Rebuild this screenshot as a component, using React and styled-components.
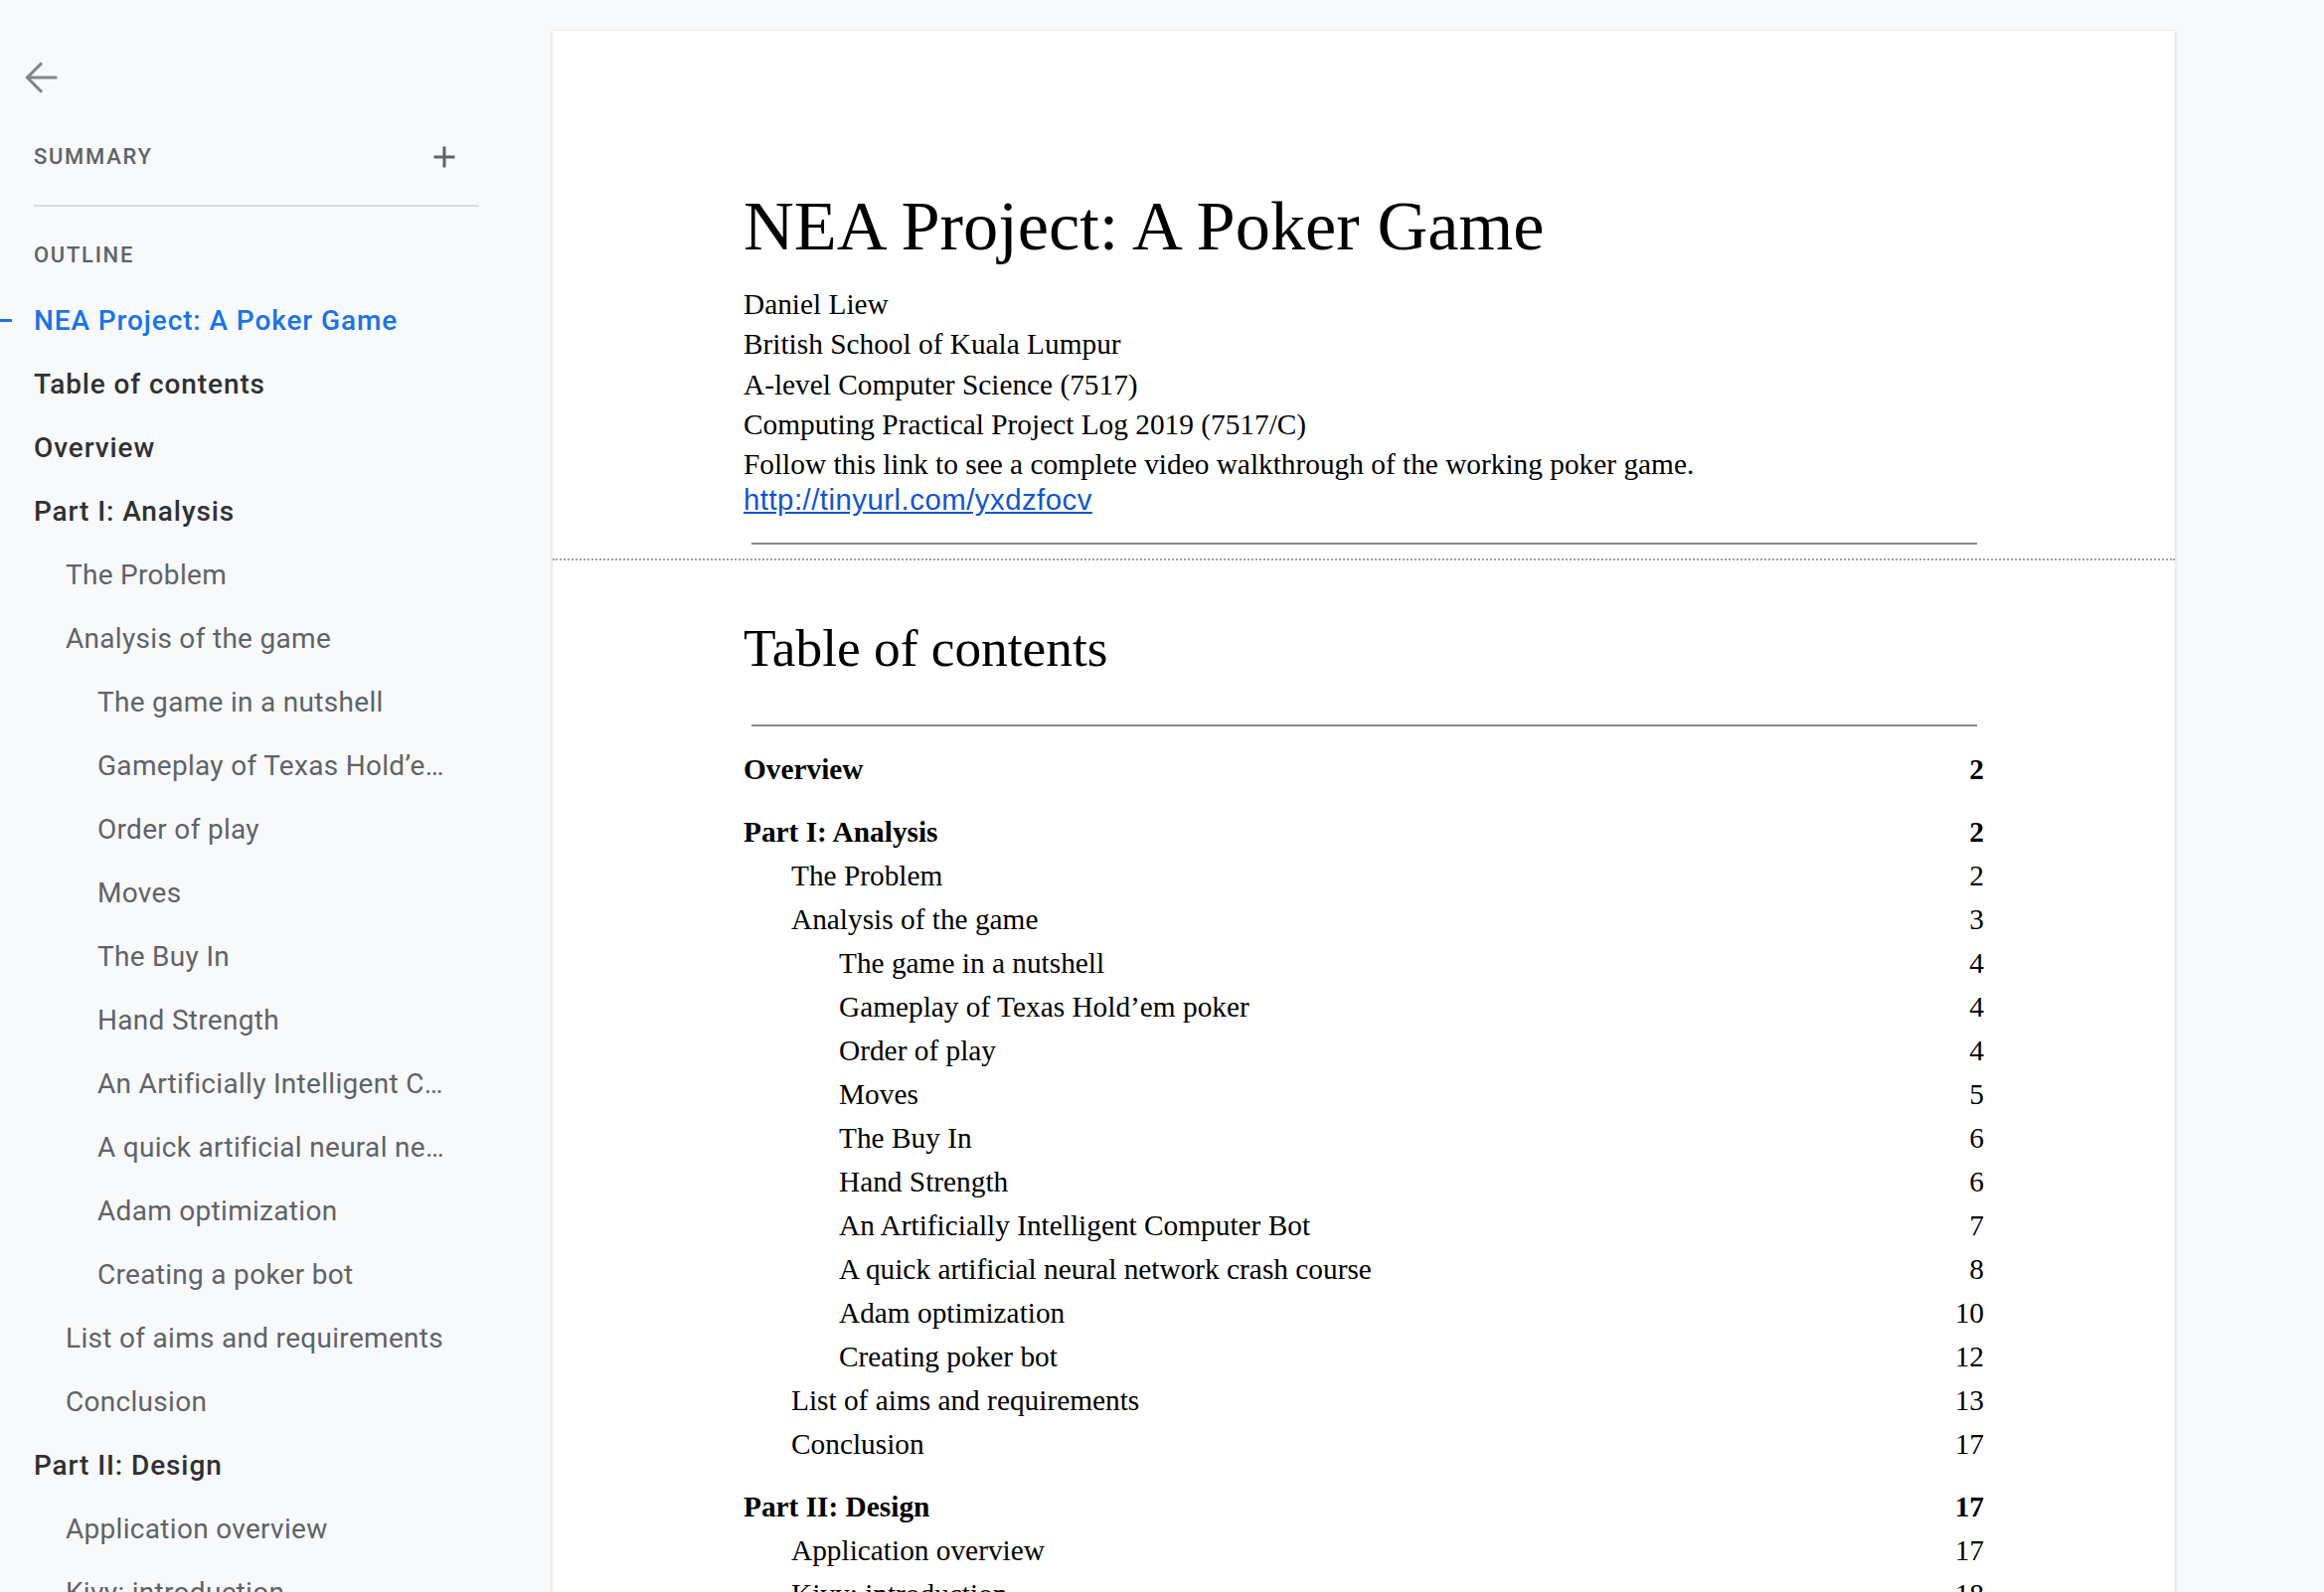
import styled, { createGlobalStyle } from "styled-components";

const Global = createGlobalStyle`
    html, body { margin: 0; padding: 0; background: #f8f9fa; overflow: hidden; }
    #root { height: 1602px; overflow: hidden; }
`

const Layout = styled.div`
    display: flex; width: 2338px; height: 1602px; overflow: hidden;
    background: #f8f9fa;
`

const Sidebar = styled.aside`
    width: 556px; flex-shrink: 0;
    display: flex; flex-direction: column;
    padding-top: 55px;
    font-family: Roboto, "Noto Sans", sans-serif;
`

const BackButton = styled.div`
    width: 48px; height: 48px; margin-left: 18px;
    display: flex; align-items: center; justify-content: center;
    color: #80868b;
`

const Section = styled.div`
    margin: 33px 74px 0 34px;
`

const SummaryRow = styled.div`
    height: 48px; padding-right: 17px;
    display: flex; align-items: center; justify-content: space-between;
`

const Label = styled.div`
    font-size: 22px; font-weight: 500; letter-spacing: 1.7px;
    color: #5f6368; line-height: 32px;
`

const AddButton = styled.div`
    width: 36px; height: 36px;
    display: flex; align-items: center; justify-content: center;
    color: #5f6368;
`

const Divider = styled.div`
    height: 2px; margin-top: 24px; background: #dadce0;
`

const OutlineLabel = styled(Label)`
    margin: 33px 0 0 34px;
`

const OutlineList = styled.div`
    width: 448px; margin-top: 18px;
    display: flex; flex-direction: column;
`

const OutlineItem = styled.div`
    position: relative;
    height: 64px; line-height: 64px;
    padding-left: ${props => 34 + props.level * 32}px;
    font-size: 28px;
    font-weight: ${props => (props.level === 0 ? 500 : 400)};
    letter-spacing: ${props => (props.level === 0 ? 0.9 : 0.3)}px;
    color: ${props => (props.active ? "#1a73e8" : props.level === 0 ? "#303134" : "#5f6368")};
    white-space: nowrap; overflow: hidden; text-overflow: ellipsis;
`

const ActiveMark = styled.span`
    position: absolute; left: 0; top: 30px;
    width: 12px; height: 3px; background: #1a73e8;
`

const Main = styled.main`
    flex: 1; display: flex; align-items: flex-start;
`

const Page = styled.div`
    width: 1632px; min-height: 2400px; margin-top: 31px;
    background: #fff;
    box-shadow: 0 1px 3px 1px rgba(60, 64, 67, 0.15);
    font-family: "Liberation Serif", "Times New Roman", serif;
    color: #000;
`

const TitleSection = styled.div`
    padding: 150px 192px 14px;
`

const Title = styled.h1`
    margin: 0 0 13px; font-size: 70.4px; font-weight: 400; line-height: 92px;
`

const InfoLine = styled.div`
    font-size: 29.33px; line-height: 40.25px;
`

const Link = styled.a`
    display: block;
    font-family: "Liberation Sans", Arial, sans-serif;
    font-size: 29.33px; line-height: 32px; letter-spacing: 0.5px;
    color: #1155cc; text-decoration: underline;
`

const Rule = styled.div`
    height: 2px; background: #8a8a8a;
    margin: ${props => props.top}px 7px 0 8px;
`

const PageBreak = styled.div`
    border-top: 2px dotted #a0a0a0;
`

const TocSection = styled.div`
    padding: 53px 192px 0;
`

const TocHeading = styled.h2`
    margin: 0; font-size: 53.33px; font-weight: 400; line-height: 70px;
`

const TocList = styled.div`
    margin-top: 2px;
    display: flex; flex-direction: column;
`

const TocRow = styled.div`
    display: flex; justify-content: space-between;
    padding-left: ${props => props.level * 48}px;
    margin-top: ${props => (props.level === 0 ? 19 : 0)}px;
    font-size: 29.33px; line-height: 44px;
    font-weight: ${props => (props.level === 0 ? 700 : 400)};
`

const outline = [
    [0, "NEA Project: A Poker Game", true],
    [0, "Table of contents"],
    [0, "Overview"],
    [0, "Part I: Analysis"],
    [1, "The Problem"],
    [1, "Analysis of the game"],
    [2, "The game in a nutshell"],
    [2, "Gameplay of Texas Hold’em poker"],
    [2, "Order of play"],
    [2, "Moves"],
    [2, "The Buy In"],
    [2, "Hand Strength"],
    [2, "An Artificially Intelligent Computer Bot"],
    [2, "A quick artificial neural network crash course"],
    [2, "Adam optimization"],
    [2, "Creating a poker bot"],
    [1, "List of aims and requirements"],
    [1, "Conclusion"],
    [0, "Part II: Design"],
    [1, "Application overview"],
    [1, "Kivy: introduction"],
    [1, "Kivy: screens"],
]

const toc = [
    [0, "Overview", 2],
    [0, "Part I: Analysis", 2],
    [1, "The Problem", 2],
    [1, "Analysis of the game", 3],
    [2, "The game in a nutshell", 4],
    [2, "Gameplay of Texas Hold’em poker", 4],
    [2, "Order of play", 4],
    [2, "Moves", 5],
    [2, "The Buy In", 6],
    [2, "Hand Strength", 6],
    [2, "An Artificially Intelligent Computer Bot", 7],
    [2, "A quick artificial neural network crash course", 8],
    [2, "Adam optimization", 10],
    [2, "Creating poker bot", 12],
    [1, "List of aims and requirements", 13],
    [1, "Conclusion", 17],
    [0, "Part II: Design", 17],
    [1, "Application overview", 17],
    [1, "Kivy: introduction", 18],
    [1, "Kivy: screens", 19],
]

function App() {
    return (
        <Layout>
            <Global />
            <Sidebar>
                <BackButton>
                    <svg width="46" height="46" viewBox="0 0 24 24" fill="none" stroke="currentColor" strokeWidth="1.6">
                        <path d="M20 12H4.6M12 4.4L4.4 12l7.6 7.6" />
                    </svg>
                </BackButton>
                <Section>
                    <SummaryRow>
                        <Label>SUMMARY</Label>
                        <AddButton>
                            <svg width="36" height="36" viewBox="0 0 24 24" fill="currentColor">
                                <path d="M19 13h-6v6h-2v-6H5v-2h6V5h2v6h6v2z" />
                            </svg>
                        </AddButton>
                    </SummaryRow>
                    <Divider />
                </Section>
                <OutlineLabel>OUTLINE</OutlineLabel>
                <OutlineList>
                    {outline.map(([level, text, active]) => (
                        <OutlineItem key={text} level={level} active={active}>
                            {active && <ActiveMark />}
                            {text}
                        </OutlineItem>
                    ))}
                </OutlineList>
            </Sidebar>
            <Main>
                <Page>
                    <TitleSection>
                        <Title>NEA Project: A Poker Game</Title>
                        <InfoLine>Daniel Liew</InfoLine>
                        <InfoLine>British School of Kuala Lumpur</InfoLine>
                        <InfoLine>A-level Computer Science (7517)</InfoLine>
                        <InfoLine>Computing Practical Project Log 2019 (7517/C)</InfoLine>
                        <InfoLine>Follow this link to see a complete video walkthrough of the working poker game.</InfoLine>
                        <Link>http://tinyurl.com/yxdzfocv</Link>
                        <Rule top={27} />
                    </TitleSection>
                    <PageBreak />
                    <TocSection>
                        <TocHeading>Table of contents</TocHeading>
                        <Rule top={42} />
                        <TocList>
                            {toc.map(([level, text, page]) => (
                                <TocRow key={text} level={level}>
                                    <span>{text}</span>
                                    <span>{page}</span>
                                </TocRow>
                            ))}
                        </TocList>
                    </TocSection>
                </Page>
            </Main>
        </Layout>
    )
}

export default App
